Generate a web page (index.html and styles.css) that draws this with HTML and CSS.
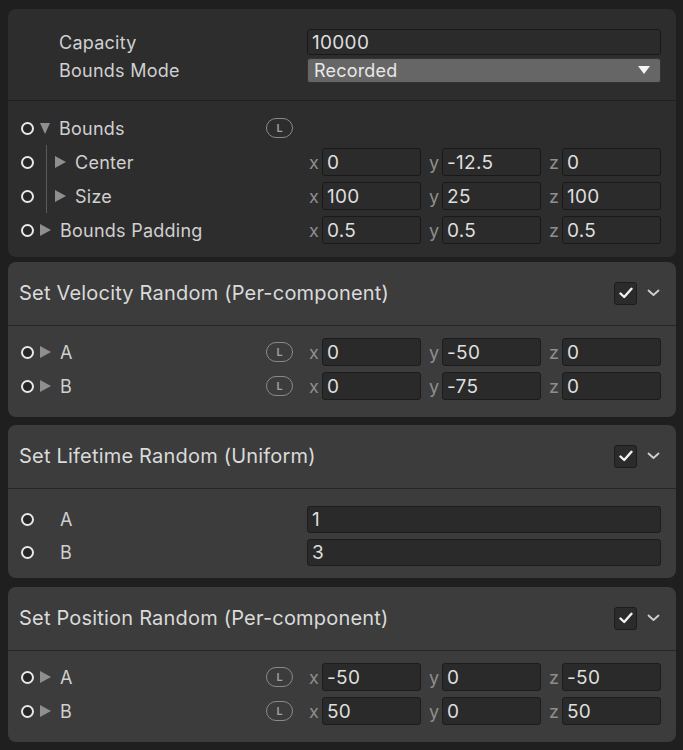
FILE: index.html
```html
<!DOCTYPE html>
<html>
<head>
<meta charset="utf-8">
<link rel="stylesheet" href="styles.css">
</head>
<body>
<div class="inspector">
  <section class="panel panel-main">
    <div class="main-top">
      <div class="row">
        <div class="lbl lbl-plain"><span class="name">Capacity</span></div>
        <div class="val"><div class="field">10000</div></div>
      </div>
      <div class="row">
        <div class="lbl lbl-plain"><span class="name">Bounds Mode</span></div>
        <div class="val"><div class="dropdown"><span>Recorded</span><span class="caret"></span></div></div>
      </div>
    </div>
    <div class="body">
      <div class="row">
        <div class="lbl">
          <span class="port"></span><span class="arrow down"></span><span class="name">Bounds</span>
          <span class="badge">L</span>
        </div>
        <div class="val"></div>
      </div>
      <div class="row">
        <div class="lbl">
          <span class="port"></span><span class="guide"></span><span class="arrow"></span><span class="name">Center</span>
        </div>
        <div class="val vec">
          <div class="comp"><span class="axis">x</span><div class="field">0</div></div>
          <div class="comp"><span class="axis">y</span><div class="field">-12.5</div></div>
          <div class="comp"><span class="axis">z</span><div class="field">0</div></div>
        </div>
      </div>
      <div class="row">
        <div class="lbl">
          <span class="port"></span><span class="guide"></span><span class="arrow"></span><span class="name">Size</span>
        </div>
        <div class="val vec">
          <div class="comp"><span class="axis">x</span><div class="field">100</div></div>
          <div class="comp"><span class="axis">y</span><div class="field">25</div></div>
          <div class="comp"><span class="axis">z</span><div class="field">100</div></div>
        </div>
      </div>
      <div class="row">
        <div class="lbl">
          <span class="port"></span><span class="arrow"></span><span class="name">Bounds Padding</span>
        </div>
        <div class="val vec">
          <div class="comp"><span class="axis">x</span><div class="field">0.5</div></div>
          <div class="comp"><span class="axis">y</span><div class="field">0.5</div></div>
          <div class="comp"><span class="axis">z</span><div class="field">0.5</div></div>
        </div>
      </div>
    </div>
  </section>

  <section class="panel block block-2">
    <header class="head">
      <span class="title">Set Velocity Random (Per-component)</span>
      <span class="check"><svg width="14" height="12" viewBox="0 0 14 12"><path d="M1.5 6.5 L5.2 10 L12.5 1.8" fill="none" stroke="#f2f2f2" stroke-width="2.4" stroke-linecap="round" stroke-linejoin="round"/></svg></span>
      <svg class="chev" width="13" height="8" viewBox="0 0 13 8"><path d="M1.5 1.5 L6.5 6 L11.5 1.5" fill="none" stroke="#d0d0d0" stroke-width="1.8" stroke-linecap="round" stroke-linejoin="round"/></svg>
    </header>
    <div class="body">
      <div class="row">
        <div class="lbl"><span class="port"></span><span class="arrow"></span><span class="name">A</span><span class="badge">L</span></div>
        <div class="val vec">
          <div class="comp"><span class="axis">x</span><div class="field">0</div></div>
          <div class="comp"><span class="axis">y</span><div class="field">-50</div></div>
          <div class="comp"><span class="axis">z</span><div class="field">0</div></div>
        </div>
      </div>
      <div class="row">
        <div class="lbl"><span class="port"></span><span class="arrow"></span><span class="name">B</span><span class="badge">L</span></div>
        <div class="val vec">
          <div class="comp"><span class="axis">x</span><div class="field">0</div></div>
          <div class="comp"><span class="axis">y</span><div class="field">-75</div></div>
          <div class="comp"><span class="axis">z</span><div class="field">0</div></div>
        </div>
      </div>
    </div>
  </section>

  <section class="panel block block-3">
    <header class="head">
      <span class="title">Set Lifetime Random (Uniform)</span>
      <span class="check"><svg width="14" height="12" viewBox="0 0 14 12"><path d="M1.5 6.5 L5.2 10 L12.5 1.8" fill="none" stroke="#f2f2f2" stroke-width="2.4" stroke-linecap="round" stroke-linejoin="round"/></svg></span>
      <svg class="chev" width="13" height="8" viewBox="0 0 13 8"><path d="M1.5 1.5 L6.5 6 L11.5 1.5" fill="none" stroke="#d0d0d0" stroke-width="1.8" stroke-linecap="round" stroke-linejoin="round"/></svg>
    </header>
    <div class="body body-uniform">
      <div class="row">
        <div class="lbl"><span class="port"></span><span class="arrow none"></span><span class="name">A</span></div>
        <div class="val"><div class="field">1</div></div>
      </div>
      <div class="row">
        <div class="lbl"><span class="port"></span><span class="arrow none"></span><span class="name">B</span></div>
        <div class="val"><div class="field">3</div></div>
      </div>
    </div>
  </section>

  <section class="panel block block-4">
    <header class="head">
      <span class="title">Set Position Random (Per-component)</span>
      <span class="check"><svg width="14" height="12" viewBox="0 0 14 12"><path d="M1.5 6.5 L5.2 10 L12.5 1.8" fill="none" stroke="#f2f2f2" stroke-width="2.4" stroke-linecap="round" stroke-linejoin="round"/></svg></span>
      <svg class="chev" width="13" height="8" viewBox="0 0 13 8"><path d="M1.5 1.5 L6.5 6 L11.5 1.5" fill="none" stroke="#d0d0d0" stroke-width="1.8" stroke-linecap="round" stroke-linejoin="round"/></svg>
    </header>
    <div class="body">
      <div class="row">
        <div class="lbl"><span class="port"></span><span class="arrow"></span><span class="name">A</span><span class="badge">L</span></div>
        <div class="val vec">
          <div class="comp"><span class="axis">x</span><div class="field">-50</div></div>
          <div class="comp"><span class="axis">y</span><div class="field">0</div></div>
          <div class="comp"><span class="axis">z</span><div class="field">-50</div></div>
        </div>
      </div>
      <div class="row">
        <div class="lbl"><span class="port"></span><span class="arrow"></span><span class="name">B</span><span class="badge">L</span></div>
        <div class="val vec">
          <div class="comp"><span class="axis">x</span><div class="field">50</div></div>
          <div class="comp"><span class="axis">y</span><div class="field">0</div></div>
          <div class="comp"><span class="axis">z</span><div class="field">50</div></div>
        </div>
      </div>
    </div>
  </section>
</div>
</body>
</html>
```

FILE: styles.css
```css
* { box-sizing: border-box; }
html, body { margin: 0; padding: 0; }
body {
  background: #1f1f1f;
  font-family: Inter, "Noto Sans", sans-serif;
  color: #cfcfcf;
  width: 683px;
  height: 750px;
  overflow: hidden;
}
.inspector {
  display: flex;
  flex-direction: column;
  padding: 9px 7px 0 8px;
}
.panel {
  border-radius: 8px;
}
.panel-main {
  background: #2d2d2d;
}
.block {
  background: #3c3c3c;
}
.block-2 { margin-top: 5px; }
.block-3 { margin-top: 8px; }
.block-4 { margin-top: 9px; }
.main-top {
  display: flex;
  flex-direction: column;
  gap: 2px;
  padding: 20px 15px 17px 13px;
  border-bottom: 1px solid #212121;
}
.main-top .row { height: 26px; }
.body {
  display: flex;
  flex-direction: column;
  gap: 6px;
  padding: 13px 15px 13px 13px;
}
.block .body { padding: 12px 15px 17px 13px; }
.block .body-uniform { padding: 17px 15px 12px 13px; gap: 6px; }
.body-uniform .row { height: 27px; }
.row {
  display: flex;
  align-items: center;
  height: 28px;
}
.lbl {
  flex: 1;
  display: flex;
  align-items: center;
  height: 100%;
  font-size: 18px;
  letter-spacing: 0.25px;
  color: #d0d0d0;
}
.lbl-plain { padding-left: 38px; }
.name { white-space: nowrap; }
.port {
  width: 13px;
  height: 13px;
  border-radius: 50%;
  border: 2px solid #e8e8e8;
  background: #262626;
  margin-right: 6px;
  flex: none;
}
.guide {
  width: 1px;
  height: 34px;
  background: #5a5a5a;
  margin-left: 6px;
  margin-right: 8px;
  flex: none;
}
.arrow {
  width: 0;
  height: 0;
  border-top: 6px solid transparent;
  border-bottom: 6px solid transparent;
  border-left: 11px solid #8f8f8f;
  margin-right: 9px;
  flex: none;
}
.arrow.down {
  border-left: 5.5px solid transparent;
  border-right: 5.5px solid transparent;
  border-top: 11px solid #8f8f8f;
  border-bottom: 0;
  margin-top: 1px;
}
.arrow.none {
  border-color: transparent;
}
.badge {
  margin-left: auto;
  margin-right: 14px;
  width: 27px;
  height: 20px;
  border: 1.5px solid #8a8a8a;
  border-radius: 10px;
  font-size: 11px;
  font-weight: 600;
  letter-spacing: 0;
  color: #a0a0a0;
  display: flex;
  align-items: center;
  justify-content: center;
  line-height: 1;
}
.val {
  width: 354px;
  flex: none;
  display: flex;
  align-items: center;
  height: 100%;
}
.vec { gap: 6px; }
.comp {
  flex: 1;
  display: flex;
  align-items: center;
  height: 100%;
}
.axis {
  width: 15px;
  flex: none;
  font-size: 18px;
  color: #8e8e8e;
  text-align: center;
  padding-right: 1px;
}
.field {
  flex: 1;
  height: 100%;
  background: #2a2a2a;
  border: 1px solid #1c1c1c;
  border-radius: 3px;
  font-size: 19px;
  letter-spacing: 0.3px;
  color: #dedede;
  display: flex;
  align-items: center;
  padding-left: 4px;
  white-space: nowrap;
}
.panel-main .field { background: #2b2b2b; border-color: #191919; }
.main-top .field { height: 26px; }
.dropdown {
  flex: 1;
  height: 25px;
  background: #666666;
  border: 1px solid #333;
  border-radius: 3px;
  font-size: 18px;
  letter-spacing: 0.2px;
  color: #e8e8e8;
  display: flex;
  align-items: center;
  justify-content: space-between;
  padding: 0 6px 0 6px;
}
.caret {
  width: 0;
  height: 0;
  border-left: 6px solid transparent;
  border-right: 6px solid transparent;
  border-top: 8px solid #f4f4f4;
  margin-right: 4px;
}
.head {
  height: 64px;
  display: flex;
  align-items: center;
  padding: 0 16px 1px 11px;
  border-bottom: 1px solid #262626;
}
.title {
  flex: 1;
  font-size: 20px;
  letter-spacing: 0.2px;
  color: #dadada;
  white-space: nowrap;
}
.check {
  width: 23px;
  height: 23px;
  background: #2b2b2b;
  border: 1px solid #1c1c1c;
  border-radius: 3px;
  display: flex;
  align-items: center;
  justify-content: center;
  margin-right: 10px;
}
.chev { display: block; }
```
